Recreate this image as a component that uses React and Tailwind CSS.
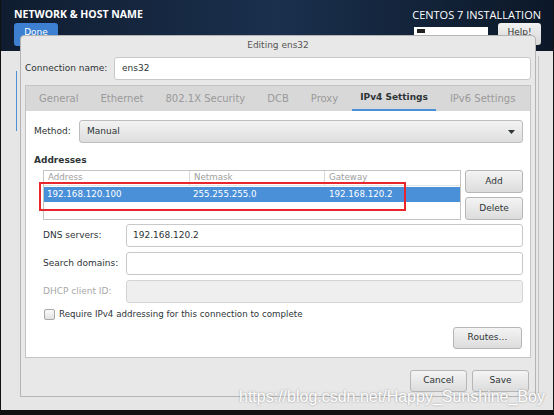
import React from 'react'

const ui = { fontFamily: '"DejaVu Sans", "Liberation Sans", sans-serif' }

const Btn = ({ children, className = '' }) => (
    <div className={`flex items-center justify-center rounded-[3px] border border-[#b6b6b6] bg-gradient-to-b from-[#f4f4f4] to-[#dcdcdc] text-[9px] text-[#2e3436] ${className}`}>
        {children}
    </div>
)

const Field = ({ label, value, disabled }) => (
    <div className="flex items-center h-[23px]">
        <span className={`w-[100px] shrink-0 whitespace-nowrap pl-[17px] text-[9px] ${disabled ? 'text-[#a8a8a8]' : 'text-[#2e3436]'}`}>{label}</span>
        <div className={`w-[397px] shrink-0 h-full rounded-[3px] border flex items-center px-[6px] text-[9px] text-[#2e3436] ${disabled ? 'bg-[#efefef] border-[#d4d4d4]' : 'bg-white border-[#c8c8c8]'}`}>
            {value}
        </div>
    </div>
)

const Tab = ({ children, active }) => (
    <div className={`h-full flex items-center whitespace-nowrap ${active ? 'text-[9px] font-bold text-[#2e3436] border-b-[2px] border-[#4a90d9] px-[8px] mx-[3px]' : 'text-[10px] px-[11px] text-[#9a9a9a]'}`}>
        {children}
    </div>
)

export default function App() {
    return (
        <div className="w-[554px] h-[415px] bg-[#111] overflow-hidden" style={ui}>
            <div className="relative w-[552px] h-[410px] ml-[1px] bg-[#e6e6e6]">
                {/* installer header */}
                <div className="h-[51px] bg-gradient-to-r from-[#101d30] via-[#1a304d] to-[#0c1828] flex justify-between pl-[13px] pr-[12px] pt-[7px]">
                    <div>
                        <div className="text-white font-bold text-[10.5px] leading-[15px]" style={{ fontFamily: '"Open Sans", sans-serif' }}>NETWORK &amp; HOST NAME</div>
                        <div className="mt-[1px] w-[44px] h-[23px] rounded-[3px] bg-[#3d7fd0] text-white text-[9px] flex justify-center pt-[3px]">Done</div>
                    </div>
                    <div className="flex flex-col items-end">
                        <div className="text-white text-[11px] leading-[15px]" style={{ fontFamily: '"Open Sans", sans-serif' }}>CENTOS 7 INSTALLATION</div>
                        <div className="flex gap-[10px] mt-[1px]">
                            <div className="w-[74px] h-[20px] mt-[4px] bg-white flex items-start px-[3px] pt-[2px]">
                                <div className="w-[8px] h-[4px] bg-[#222]"></div>
                            </div>
                            <div className="w-[43px] h-[22px] rounded-[3px] bg-gradient-to-b from-[#f2f2f2] to-[#d6d6d6] text-[9px] text-[#333] flex justify-center pt-[3px]">Help!</div>
                        </div>
                    </div>
                </div>
                {/* background panels */}
                <div className="flex h-[359px]">
                    <div className="ml-[15px] mt-[20px] w-[3px] h-[60px] border-l border-[#4a90d9]"></div>
                    <div className="ml-auto mr-[14px] mt-[5px] w-[1px] h-[340px] bg-[#c4c4c4]"></div>
                </div>

                {/* dialog */}
                <div className="absolute left-[19px] top-[35px] w-[516px] h-[362px] bg-[#e8e8e8] border border-[#b4b4b4] rounded-t-[4px] flex flex-col px-[4px]">
                    <div className="h-[20px] flex items-center justify-center text-[9px] text-[#555]">Editing ens32</div>
                    <div className="flex items-center h-[23px] mt-[1px]">
                        <span className="w-[89px] shrink-0 whitespace-nowrap text-[9px] text-[#2e3436]">Connection name:</span>
                        <div className="w-[417px] shrink-0 h-full bg-white border border-[#c8c8c8] rounded-[3px] flex items-center px-[7px] text-[9px] text-[#2e3436]">ens32</div>
                    </div>
                    {/* notebook */}
                    <div className="mt-[5px] w-[506px] border border-[#c4c4c4] flex flex-col">
                        <div className="h-[25px] bg-[#d8d8d8] flex items-stretch pl-[2px]">
                            <Tab>General</Tab>
                            <Tab>Ethernet</Tab>
                            <Tab>802.1X Security</Tab>
                            <Tab>DCB</Tab>
                            <Tab>Proxy</Tab>
                            <Tab active>IPv4 Settings</Tab>
                            <Tab>IPv6 Settings</Tab>
                        </div>
                        <div className="relative h-[246px] bg-white flex flex-col">
                            <div className="flex items-center h-[23px] mt-[9px]">
                                <span className="w-[53px] shrink-0 pl-[8px] text-[9px] text-[#2e3436]">Method:</span>
                                <div className="w-[444px] shrink-0 h-full rounded-[3px] border border-[#bdbdbd] bg-gradient-to-b from-[#f3f3f3] to-[#dedede] flex items-center justify-between px-[7px] text-[9px] text-[#2e3436]">
                                    <span>Manual</span>
                                    <svg width="7" height="4" viewBox="0 0 7 4"><path d="M0 0h7L3.5 4z" fill="#2e3436" /></svg>
                                </div>
                            </div>
                            <div className="mt-[11px] pl-[8px] text-[9px] font-bold text-[#2e3436] leading-[12px]">Addresses</div>
                            <div className="flex mt-[4px] pl-[17px]">
                                <div className="w-[418px] h-[50px] border border-[#c4c4c4] bg-white text-[8.7px]">
                                    <div className="flex h-[15px] text-[#a0a0a0] border-b border-[#e4e4e4]">
                                        <div className="w-[146px] pl-[4px] border-r border-[#dadada] flex items-center">Address</div>
                                        <div className="w-[135px] pl-[4px] border-r border-[#dadada] flex items-center">Netmask</div>
                                        <div className="flex-1 pl-[4px] flex items-center">Gateway</div>
                                    </div>
                                    <div className="flex h-[15px] mt-[1px] bg-[#4a90d9] text-white">
                                        <div className="w-[146px] pl-[3px] flex items-center">192.168.120.100</div>
                                        <div className="w-[135px] pl-[3px] flex items-center">255.255.255.0</div>
                                        <div className="flex-1 pl-[4px] flex items-center">192.168.120.2</div>
                                    </div>
                                </div>
                                <div className="ml-[4px] flex flex-col gap-[4px]">
                                    <Btn className="w-[58px] h-[23px]">Add</Btn>
                                    <Btn className="w-[58px] h-[23px]">Delete</Btn>
                                </div>
                            </div>
                            <div className="absolute left-[13px] top-[71px] w-[367px] h-[29px] border-2 border-[#e8262b]"></div>
                            <div className="mt-[4px] flex flex-col gap-[5px]">
                                <Field label="DNS servers:" value="192.168.120.2" />
                                <Field label="Search domains:" value="" />
                                <Field label="DHCP client ID:" value="" disabled />
                            </div>
                            <div className="flex items-center mt-[6px] pl-[18px] h-[11px]">
                                <div className="w-[11px] h-[11px] rounded-[2px] border border-[#a8a8a8] bg-gradient-to-b from-[#fafafa] to-[#e2e2e2]"></div>
                                <span className="ml-[4px] text-[8.7px] text-[#2e3436]">Require IPv4 addressing for this connection to complete</span>
                            </div>
                            <div className="flex justify-end pr-[8px] mt-[7px]">
                                <Btn className="w-[69px] h-[22px]">Routes…</Btn>
                            </div>
                        </div>
                    </div>
                    <div className="flex justify-end gap-[5px] mt-[12px] pr-[2px]">
                        <Btn className="w-[57px] h-[22px]">Cancel</Btn>
                        <Btn className="w-[57px] h-[22px]">Save</Btn>
                    </div>
                </div>

                {/* watermark */}
                <div className="absolute left-[238px] top-[388px] text-[16px] text-white leading-[18px] whitespace-nowrap" style={{ fontFamily: '"Liberation Sans", sans-serif', textShadow: '0 0 2px #8a8a8a' }}>
                    https://blog.csdn.net/Happy_Sunshine_Boy
                </div>
            </div>
        </div>
    )
}
